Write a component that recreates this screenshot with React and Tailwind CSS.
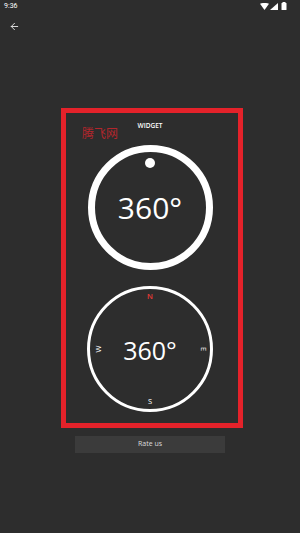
import React from 'react';
import { ArrowLeft } from 'lucide-react';

function StatusBar() {
  return (
    <div className="h-[12px] flex items-center justify-between pl-[4px] pr-[13px]">
      <span className="text-[7px] leading-[12px] text-white font-['Roboto']">9:36</span>
      <div className="flex items-center gap-[1px]">
        <svg width="9" height="7" viewBox="0 0 9 7">
          <path d="M0 0.8 Q4.5 -1 9 0.8 L4.5 7 Z" fill="#fff" />
        </svg>
        <svg width="8" height="7" viewBox="0 0 8 7">
          <path d="M8 0 L8 7 L0 7 Z" fill="#fff" />
        </svg>
        <svg width="6" height="8" viewBox="0 0 6 8" className="ml-[2px]">
          <rect x="1.5" y="0" width="3" height="1" fill="#fff" />
          <rect x="0.5" y="1" width="5" height="7" rx="0.5" fill="#fff" />
        </svg>
      </div>
    </div>
  );
}

function Gauge() {
  return (
    <div className="relative w-[125px] h-[125px] rounded-full border-[7px] border-white flex items-center justify-center">
      <div className="absolute top-[6px] left-1/2 -translate-x-1/2 w-[10px] h-[10px] rounded-full bg-white" />
      <span className="text-[30px] leading-none text-white">360°</span>
    </div>
  );
}

function Compass() {
  return (
    <div className="relative w-[126px] h-[126px] rounded-full border-[3px] border-white flex items-center justify-center">
      <span className="absolute top-[4px] left-1/2 -translate-x-1/2 text-[7.5px] leading-none text-[#e53935] font-semibold">N</span>
      <span className="absolute bottom-[4px] left-1/2 -translate-x-1/2 text-[7.5px] leading-none text-white">S</span>
      <span className="absolute left-[5px] top-1/2 -translate-y-1/2 -rotate-90 text-[7.5px] leading-none text-white">W</span>
      <span className="absolute right-[5px] top-1/2 -translate-y-1/2 rotate-90 text-[7.5px] leading-none text-white">E</span>
      <span className="text-[25px] leading-none text-white pt-[3px]">360°</span>
    </div>
  );
}

export default function App() {
  return (
    <div className="w-[300px] h-[533px] bg-[#2d2d2d] font-['Open_Sans',sans-serif] overflow-hidden">
      <StatusBar />
      <div className="h-[28px] flex items-center pl-[9px]">
        <ArrowLeft size={11} strokeWidth={2} color="#e8e8e8" />
      </div>

      <div className="ml-[61px] mt-[68px] w-[182px] h-[320px] border-[5px] border-[#e4222a] relative flex flex-col items-center pr-[4px]">
        <span className="absolute left-[16px] top-[14px] text-[12px] leading-none text-[#b3262c] font-['Noto_Sans_CJK_SC',serif]">腾飞网</span>
        <div className="pt-[8px] h-[18px] text-[6.5px] leading-[10px] text-white font-semibold">WIDGET</div>
        <div className="mt-[14px]">
          <Gauge />
        </div>
        <div className="mt-[16px]">
          <Compass />
        </div>
      </div>

      <div className="ml-[75px] mt-[8px] w-[150px] h-[17px] bg-[#3b3b3b] flex items-center justify-center">
        <span className="text-[7px] text-[#dcdcdc]">Rate us</span>
      </div>
    </div>
  );
}
